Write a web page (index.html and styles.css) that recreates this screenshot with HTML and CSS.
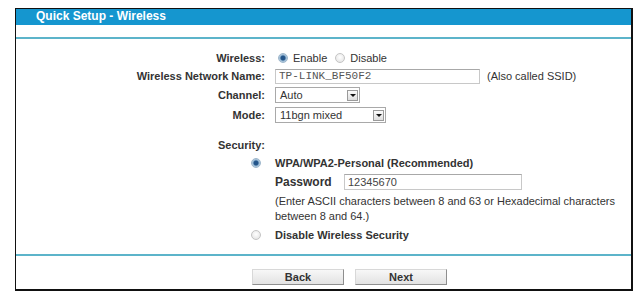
FILE: index.html
```html
<!DOCTYPE html>
<html>
<head>
<meta charset="utf-8">
<title>Quick Setup - Wireless</title>
<link rel="stylesheet" href="styles.css">
</head>
<body>
<div class="frame">
  <div class="title">Quick Setup - Wireless</div>
  <div class="rule top"></div>
  <div class="form">
    <div class="label r1">Wireless:</div>
    <div class="ctrl r1">
      <input type="radio" class="radio" name="w" checked><span class="opt">Enable</span>
      <input type="radio" class="radio" name="w"><span class="opt">Disable</span>
    </div>

    <div class="label r2">Wireless Network Name:</div>
    <div class="ctrl r2">
      <input type="text" class="text ssid" value="TP-LINK_BF50F2">
      <span class="note">(Also called SSID)</span>
    </div>

    <div class="label r3">Channel:</div>
    <div class="ctrl r3">
      <div class="select chan"><span>Auto</span><span class="arrow"></span></div>
    </div>

    <div class="label r3">Mode:</div>
    <div class="ctrl r3">
      <div class="select mode"><span>11bgn mixed</span><span class="arrow"></span></div>
    </div>

    <div class="label r1 sec">Security:</div>
    <div class="ctrl r1 sec"></div>

    <div class="label r1"><input type="radio" class="radio side" name="s" checked></div>
    <div class="ctrl r1"><b>WPA/WPA2-Personal (Recommended)</b></div>

    <div class="label r3"></div>
    <div class="ctrl r3">
      <b class="pwlabel">Password</b>
      <input type="text" class="text pw" value="12345670">
    </div>

    <div class="label"></div>
    <div class="ctrl help">(Enter ASCII characters between 8 and 63 or Hexadecimal characters between 8 and 64.)</div>

    <div class="label r1 last"><input type="radio" class="radio side" name="s"></div>
    <div class="ctrl r1 last"><b>Disable Wireless Security</b></div>
  </div>
  <div class="rule"></div>
  <div class="buttons">
    <button class="btn">Back</button>
    <button class="btn">Next</button>
  </div>
</div>
</body>
</html>
```
FILE: styles.css
```css
html, body {
  margin: 0;
  padding: 0;
  background: #fff;
}
body {
  font-family: "Liberation Sans", Arial, sans-serif;
  font-size: 11px;
  color: #333;
}
.frame {
  box-sizing: border-box;
  width: 618px;
  margin: 8px 0 0 15px;
  border: 1px solid #111;
  border-right-width: 2px;
  border-bottom-width: 2px;
}
.title {
  height: 16px;
  line-height: 15px;
  background: #1596cf;
  color: #fff;
  font-weight: bold;
  font-size: 12px;
  padding-left: 20px;
}
.rule {
  height: 2px;
  background: #5cb4ca;
}
.rule.top {
  margin-top: 12px;
}
.form {
  display: grid;
  grid-template-columns: 249px 1fr;
  column-gap: 10px;
  padding-top: 10px;
  padding-bottom: 10px;
}
.label {
  display: flex;
  align-items: center;
  justify-content: flex-end;
  font-weight: bold;
  color: #333;
}
.ctrl {
  display: flex;
  align-items: center;
}
.r1 { height: 18px; }
.r2 { height: 18px; }
.r3 { height: 20px; }
.sec { margin-top: 11px; }
.last { margin-top: 2px; }
.radio {
  appearance: none;
  -webkit-appearance: none;
  box-sizing: border-box;
  width: 10px;
  height: 10px;
  margin: 0 5px 0 3px;
  border-radius: 50%;
  border: 1px solid #c4c4c4;
  background: radial-gradient(circle at 50% 40%, #ffffff 0, #e9e9e9 70%);
}
.radio:checked {
  border-color: #9db6cb;
  background: radial-gradient(circle, #24558a 0, #24558a 2px, #8fb2cf 3px, #dfeaf3 5px);
}
.radio.side {
  margin: 0 4px 0 0;
}
.opt {
  margin-right: 5px;
}
.text {
  box-sizing: border-box;
  height: 15px;
  margin: 0;
  padding: 0 3px;
  border: 1px solid #c8c8c8;
  border-top-color: #a8a8a8;
  background: #fff;
  font-size: 11px;
  color: #444;
  outline: none;
}
.ssid {
  width: 205px;
  font-family: "Liberation Mono", "Courier New", monospace;
  color: #555;
}
.note {
  margin-left: 7px;
}
.select {
  box-sizing: border-box;
  height: 16px;
  border: 1px solid #a9a9a9;
  display: flex;
  align-items: center;
  justify-content: space-between;
  padding: 0 1px 0 4px;
  background: #fff;
}
.chan { width: 85px; }
.mode { width: 111px; }
.arrow {
  box-sizing: border-box;
  width: 11px;
  height: 11px;
  border: 1px solid #9a9a9a;
  background: linear-gradient(#fbfbfb, #dedede);
  display: flex;
  align-items: center;
  justify-content: center;
}
.arrow::after {
  content: "";
  border-left: 3px solid transparent;
  border-right: 3px solid transparent;
  border-top: 3px solid #111;
}
.pwlabel {
  width: 69px;
  font-size: 12px;
}
.pw {
  width: 178px;
  height: 16px;
  font-family: "Liberation Sans", Arial, sans-serif;
}
.help {
  display: block;
  line-height: 15px;
  padding-top: 2px;
  padding-right: 0;
}
.buttons {
  display: flex;
  gap: 11px;
  padding: 13px 0 4px 236px;
}
.btn {
  box-sizing: border-box;
  width: 92px;
  height: 16px;
  margin: 0;
  padding: 0;
  border: 1px solid;
  border-color: #d8d8d8 #8e8e8e #8e8e8e #d8d8d8;
  background: linear-gradient(#f7f7f7, #e2e2e2);
  font-family: "Liberation Sans", Arial, sans-serif;
  font-size: 11px;
  font-weight: bold;
  color: #333;
  line-height: 14px;
}
b {
  font-weight: bold;
}
```
